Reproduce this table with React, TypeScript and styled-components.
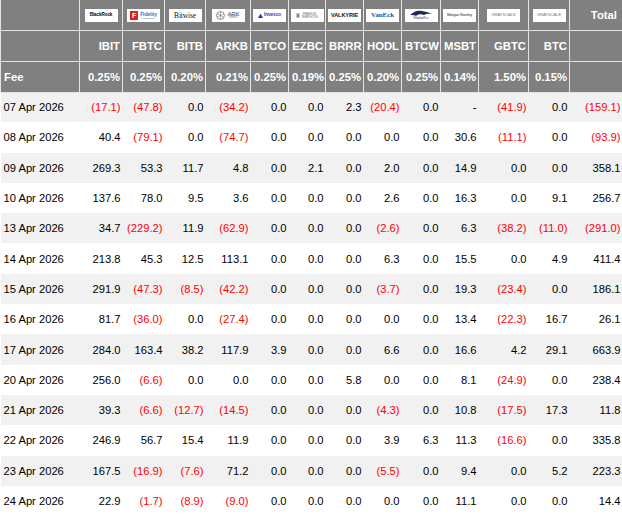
import React from 'react'
import styled, { createGlobalStyle } from 'styled-components'

const GlobalStyle = createGlobalStyle`
  html, body {
    margin: 0;
    padding: 0;
    background: #ffffff;
    font-family: "Liberation Sans", Arial, sans-serif;
  }
`

type Fund = { ticker: string; fee: string; logo: string }

const funds: Fund[] = [
  { ticker: 'IBIT', fee: '0.25%', logo: 'blackrock' },
  { ticker: 'FBTC', fee: '0.25%', logo: 'fidelity' },
  { ticker: 'BITB', fee: '0.20%', logo: 'bitwise' },
  { ticker: 'ARKB', fee: '0.21%', logo: 'ark' },
  { ticker: 'BTCO', fee: '0.25%', logo: 'invesco' },
  { ticker: 'EZBC', fee: '0.19%', logo: 'franklin' },
  { ticker: 'BRRR', fee: '0.25%', logo: 'valkyrie' },
  { ticker: 'HODL', fee: '0.20%', logo: 'vaneck' },
  { ticker: 'BTCW', fee: '0.25%', logo: 'wisdomtree' },
  { ticker: 'MSBT', fee: '0.14%', logo: 'morgan' },
  { ticker: 'GBTC', fee: '1.50%', logo: 'grayscale' },
  { ticker: 'BTC', fee: '0.15%', logo: 'grayscale' },
]

const colWidths = [79, 43, 42, 41, 45, 38, 37, 38, 38, 39, 38, 50, 41, 53]

// null = no data ("-")
const rows: [string, (number | null)[]][] = [
  ['07 Apr 2026', [-17.1, -47.8, 0, -34.2, 0, 0, 2.3, -20.4, 0, null, -41.9, 0, -159.1]],
  ['08 Apr 2026', [40.4, -79.1, 0, -74.7, 0, 0, 0, 0, 0, 30.6, -11.1, 0, -93.9]],
  ['09 Apr 2026', [269.3, 53.3, 11.7, 4.8, 0, 2.1, 0, 2.0, 0, 14.9, 0, 0, 358.1]],
  ['10 Apr 2026', [137.6, 78.0, 9.5, 3.6, 0, 0, 0, 2.6, 0, 16.3, 0, 9.1, 256.7]],
  ['13 Apr 2026', [34.7, -229.2, 11.9, -62.9, 0, 0, 0, -2.6, 0, 6.3, -38.2, -11.0, -291.0]],
  ['14 Apr 2026', [213.8, 45.3, 12.5, 113.1, 0, 0, 0, 6.3, 0, 15.5, 0, 4.9, 411.4]],
  ['15 Apr 2026', [291.9, -47.3, -8.5, -42.2, 0, 0, 0, -3.7, 0, 19.3, -23.4, 0, 186.1]],
  ['16 Apr 2026', [81.7, -36.0, 0, -27.4, 0, 0, 0, 0, 0, 13.4, -22.3, 16.7, 26.1]],
  ['17 Apr 2026', [284.0, 163.4, 38.2, 117.9, 3.9, 0, 0, 6.6, 0, 16.6, 4.2, 29.1, 663.9]],
  ['20 Apr 2026', [256.0, -6.6, 0, 0, 0, 0, 5.8, 0, 0, 8.1, -24.9, 0, 238.4]],
  ['21 Apr 2026', [39.3, -6.6, -12.7, -14.5, 0, 0, 0, -4.3, 0, 10.8, -17.5, 17.3, 11.8]],
  ['22 Apr 2026', [246.9, 56.7, 15.4, 11.9, 0, 0, 0, 3.9, 6.3, 11.3, -16.6, 0, 335.8]],
  ['23 Apr 2026', [167.5, -16.9, -7.6, 71.2, 0, 0, 0, -5.5, 0, 9.4, 0, 5.2, 223.3]],
  ['24 Apr 2026', [22.9, -1.7, -8.9, -9.0, 0, 0, 0, 0, 0, 11.1, 0, 0, 14.4]],
]

const fmt = (v: number | null) => {
  if (v === null) return '-'
  if (v < 0) return `(${Math.abs(v).toFixed(1)})`
  return v.toFixed(1)
}

const Table = styled.table`
  width: 622px;
  table-layout: fixed;
  border-collapse: collapse;
  font-size: 11px;
`

const HeadRow = styled.tr<{ $h: number }>`
  height: ${p => p.$h}px;
  background: #808080;
`

const HeadCell = styled.th<{ $left?: boolean; $pad?: number }>`
  padding: 0 ${p => p.$pad ?? 2}px 0 3px;
  border: 1px solid #e4e4e4;
  border-top: none;
  color: #ffffff;
  font-weight: bold;
  font-size: 11.3px;
  text-align: ${p => (p.$left ? 'left' : 'right')};
  vertical-align: middle;
  white-space: nowrap;
`

const LogoCell = styled.th`
  padding: 1px 0 0;
  border: 1px solid #e4e4e4;
  border-top: none;
  text-align: center;
  vertical-align: middle;
`

const Row = styled.tr<{ $shade: boolean }>`
  height: 30.3px;
  background: ${p => (p.$shade ? '#f1f1f1' : '#ffffff')};
`

const DateCell = styled.td`
  padding: 0 0 0 3px;
  color: #000000;
  font-size: 11.2px;
  white-space: nowrap;
`

const Num = styled.td<{ $neg: boolean }>`
  padding: 0 2px 0 0;
  text-align: right;
  color: ${p => (p.$neg ? '#ff0000' : '#000000')};
  font-size: 11.2px;
  white-space: nowrap;
`

const LogoBox = styled.span`
  display: inline-flex;
  align-items: center;
  justify-content: center;
  width: 33px;
  height: 13px;
  background: #ffffff;
  overflow: hidden;
  vertical-align: middle;
  line-height: 1;
`

const Tiny = styled.span<{ $size: number; $color?: string; $weight?: number; $serif?: boolean }>`
  font-size: ${p => p.$size}px;
  color: ${p => p.$color ?? '#111'};
  font-weight: ${p => p.$weight ?? 400};
  font-family: ${p => (p.$serif ? '"Liberation Serif", "Times New Roman", serif' : '"Liberation Sans", Arial, sans-serif')};
  letter-spacing: -0.1px;
  white-space: nowrap;
`

const Stack = styled.span`
  display: inline-flex;
  flex-direction: column;
  align-items: center;
  line-height: 1;
`

const FidelityMark = styled.span`
  display: inline-flex;
  align-items: center;
  justify-content: center;
  width: 8px;
  height: 9px;
  margin-right: 2px;
  background: #d9241c;
  color: #fff;
  font-size: 7px;
  font-weight: bold;
`

const Logo = ({ name }: { name: string }) => {
  switch (name) {
    case 'blackrock':
      return (
        <LogoBox>
          <Tiny $size={4.6} $weight={700} $color="#000">BlackRock</Tiny>
        </LogoBox>
      )
    case 'fidelity':
      return (
        <LogoBox>
          <FidelityMark>F</FidelityMark>
          <Stack>
            <Tiny $size={5} $weight={700} $color="#3a6fc2">Fidelity</Tiny>
            <Tiny $size={2} $color="#3a6fc2">INVESTMENTS</Tiny>
          </Stack>
        </LogoBox>
      )
    case 'bitwise':
      return (
        <LogoBox>
          <Tiny $size={7.4} $serif $color="#111">Bitwise</Tiny>
        </LogoBox>
      )
    case 'ark':
      return (
        <LogoBox>
          <svg width="9" height="9" viewBox="0 0 10 10" style={{ marginRight: 2 }}>
            <circle cx="5" cy="5" r="4.4" fill="none" stroke="#555" strokeWidth="0.7" />
            <path d="M5 0.8 L5 9.2 M1.2 3.2 L8.8 6.8 M1.2 6.8 L8.8 3.2" stroke="#555" strokeWidth="0.5" />
          </svg>
          <Stack>
            <Tiny $size={6} $color="#444">ARK</Tiny>
            <Tiny $size={2.6} $color="#666">INVEST</Tiny>
          </Stack>
        </LogoBox>
      )
    case 'invesco':
      return (
        <LogoBox>
          <svg width="5" height="5" viewBox="0 0 10 10" style={{ marginRight: 1 }}>
            <path d="M0 10 L5 1 L10 10 Z" fill="#1f3fae" />
          </svg>
          <Tiny $size={4.8} $weight={700} $color="#1f3fae">Invesco</Tiny>
        </LogoBox>
      )
    case 'franklin':
      return (
        <LogoBox>
          <svg width="4" height="5" viewBox="0 0 4 5" style={{ marginRight: 1 }}>
            <rect x="0.5" y="0.5" width="3" height="4" fill="#888" />
          </svg>
          <Stack>
            <Tiny $size={2.8} $color="#666">FRANKLIN</Tiny>
            <Tiny $size={2.8} $color="#666">TEMPLETON</Tiny>
          </Stack>
        </LogoBox>
      )
    case 'valkyrie':
      return (
        <LogoBox>
          <Tiny $size={5.6} $weight={700} $color="#111">VALKYRIE</Tiny>
        </LogoBox>
      )
    case 'vaneck':
      return (
        <LogoBox>
          <Tiny $size={7} $serif $weight={700} $color="#2c55a6">VanEck</Tiny>
        </LogoBox>
      )
    case 'wisdomtree':
      return (
        <LogoBox>
          <Stack>
            <svg width="24" height="7" viewBox="0 0 22 7">
              <path d="M0 5 C4 1 8 0 12 1 C15 1.5 18 2 22 4 C18 3.5 16 4 14 5 C11 4 8 4 6 6 C5 5 3 5 0 5 Z" fill="#1f2a5a" />
            </svg>
            <Tiny $size={3.2} $serif $color="#1f2a5a">WisdomTree</Tiny>
          </Stack>
        </LogoBox>
      )
    case 'morgan':
      return (
        <LogoBox>
          <Tiny $size={3.8} $color="#222">Morgan Stanley</Tiny>
        </LogoBox>
      )
    default:
      return (
        <LogoBox>
          <Tiny $size={4.2} $color="#777">GRAYSCALE</Tiny>
        </LogoBox>
      )
  }
}

const App = () => (
  <>
    <GlobalStyle />
    <Table>
      <colgroup>
        {colWidths.map((w, i) => (
          <col key={i} style={{ width: w }} />
        ))}
      </colgroup>
      <thead>
        <HeadRow $h={30}>
          <HeadCell />
          {funds.map(f => (
            <LogoCell key={f.ticker}>
              <Logo name={f.logo} />
            </LogoCell>
          ))}
          <HeadCell $pad={5}>Total</HeadCell>
        </HeadRow>
        <HeadRow $h={31}>
          <HeadCell />
          {funds.map(f => (
            <HeadCell key={f.ticker}>{f.ticker}</HeadCell>
          ))}
          <HeadCell />
        </HeadRow>
        <HeadRow $h={31}>
          <HeadCell $left>Fee</HeadCell>
          {funds.map(f => (
            <HeadCell key={f.ticker}>{f.fee}</HeadCell>
          ))}
          <HeadCell />
        </HeadRow>
      </thead>
      <tbody>
        {rows.map(([date, vals], i) => (
          <Row key={date} $shade={i % 2 === 0}>
            <DateCell>{date}</DateCell>
            {vals.map((v, j) => (
              <Num key={j} $neg={v !== null && v < 0}>
                {fmt(v)}
              </Num>
            ))}
          </Row>
        ))}
      </tbody>
    </Table>
  </>
)

export default App
